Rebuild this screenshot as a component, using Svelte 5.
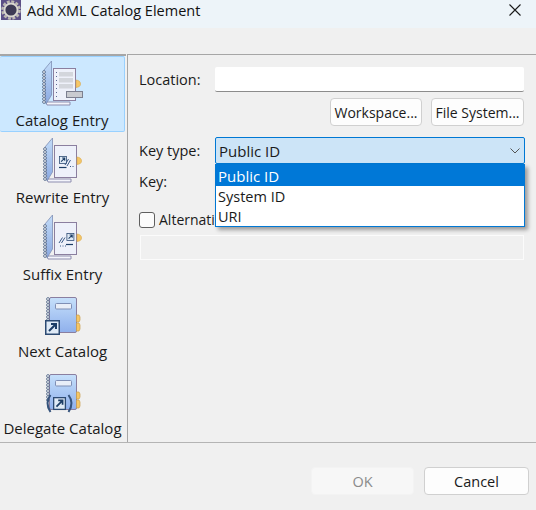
<script>
  const items = [
    { label: 'Catalog Entry', kind: 'catalog', selected: true },
    { label: 'Rewrite Entry', kind: 'rewrite' },
    { label: 'Suffix Entry', kind: 'suffix' },
    { label: 'Next Catalog', kind: 'next' },
    { label: 'Delegate Catalog', kind: 'delegate' }
  ];
  const spiralA = [14, 17, 20, 23, 26, 29, 32, 35, 38, 41, 44];
  const spiralB = [10, 13, 16, 19, 22, 25, 28, 31, 34];
</script>

{#snippet notebook()}
  <path d="M9 44 H33 V47 H10 Z" fill="#f4f5fb" stroke="#8d8daf" />
  <path d="M7 12 L14.5 3 V37 L9 46 Z" fill="url(#cover)" stroke="#7f8fb5" stroke-width=".8" />
  {#each spiralA as y}
    <circle cx="7" cy={y} r="1.4" fill="#fff" stroke="#43597c" stroke-width=".8" />
  {/each}
  <rect x="16.5" y="10.5" width="22" height="32" fill="#eef1fa" stroke="#8b7f9f" />
  <path d="M39 22 Q43.5 22.5 43.5 26 Q43.5 29 39 29.5 Z" fill="#f6c766" stroke="#d9a64a" stroke-width=".6" />
{/snippet}

{#snippet arrowBox(x, y, s)}
  <g transform="translate({x} {y}) scale({s})">
    <rect x=".75" y=".75" width="13.5" height="13.5" fill="#dfeaf6" stroke="#2c4a72" stroke-width="1.5" />
    <path d="M4 11 L10.5 4.5 M6 4 H11 V9" fill="none" stroke="#1c3d66" stroke-width="2" />
  </g>
{/snippet}

{#snippet book()}
  <rect x="11.5" y="8.5" width="27" height="35" rx="1.5" fill="url(#book)" stroke="#8a7fa0" />
  <rect x="17.5" y="14.5" width="16" height="5.5" rx="1" fill="#e8eef8" stroke="#7f8fb5" />
  <path d="M38.5 26 H41 L42 28 V31 L41 33 H38.5 Z M38.5 34 H41 L42 36 V40 L41 42 H38.5 Z" fill="#f6c766" stroke="#c99e4e" stroke-width=".7" />
  {#each spiralB as y}
    <circle cx="10" cy={y} r="1.4" fill="#fff" stroke="#43597c" stroke-width=".8" />
  {/each}
{/snippet}

{#snippet icon(kind)}
  <svg class="icon" viewBox="0 0 50 50" width="50" height="50" aria-hidden="true">
    <defs>
      <linearGradient id="cover" x1="0" y1="0" x2="0" y2="1">
        <stop offset="0" stop-color="#c3dcf8" />
        <stop offset="1" stop-color="#8aa9e2" />
      </linearGradient>
      <linearGradient id="book" x1="0" y1="0" x2="0" y2="1">
        <stop offset="0" stop-color="#c6e0fb" />
        <stop offset="1" stop-color="#8fb0ec" />
      </linearGradient>
    </defs>
    {#if kind === 'catalog'}
      {@render notebook()}
      <path d="M19.5 14 V40" stroke="#5a6a95" stroke-width="1" stroke-dasharray="1 3" />
      <rect x="22" y="14" width="14" height="4.5" fill="#d3d6dc" />
      <rect x="22" y="20" width="14" height="4.5" fill="#d3d6dc" />
      <rect x="22" y="26" width="14" height="4.5" fill="#d3d6dc" />
      <rect x="29.5" y="33.5" width="16" height="6" fill="#c9cbd0" stroke="#7c8090" />
    {:else if kind === 'rewrite'}
      {@render notebook()}
      {@render arrowBox(21, 21, 0.52)}
      <path d="M21 32.5 H28.5" stroke="#1c3d66" stroke-width="1.2" />
      <path d="M27 30 L30.5 24 M29 31 L32.5 25" stroke="#3a5a86" stroke-width="1" />
      <path d="M32 31.5 H37" stroke="#3a5a86" stroke-dasharray="1 1.5" />
    {:else if kind === 'suffix'}
      {@render notebook()}
      {@render arrowBox(28.5, 21, 0.52)}
      <path d="M21 31 L24.5 25.5 M23.5 31 L27 25.5" stroke="#3a5a86" stroke-width="1" />
      <path d="M28 32.5 H35" stroke="#1c3d66" stroke-width="1.2" />
      <path d="M22 34 H28" stroke="#3a5a86" stroke-dasharray="1 1.5" />
    {:else if kind === 'next'}
      {@render book()}
      {@render arrowBox(7, 31, 1)}
    {:else}
      {@render book()}
      {@render arrowBox(15, 31, 0.87)}
      <path d="M12.5 29 Q6.5 37 12.5 46" fill="none" stroke="#35537c" stroke-width="2" />
      <path d="M30.5 29 Q36.5 37 30.5 46" fill="none" stroke="#35537c" stroke-width="2" />
    {/if}
  </svg>
{/snippet}

<div class="window">
  <header class="titlebar">
    <svg class="appicon" viewBox="0 0 20 20" width="20" height="20" aria-hidden="true">
      <rect width="20" height="20" fill="#5b4f86" />
      <circle cx="10" cy="10" r="8.6" fill="none" stroke="#bdbab2" stroke-width="2.4" stroke-dasharray="3 1.5" />
      <circle cx="10" cy="10" r="6.6" fill="#3d3a55" stroke="#d9d7d0" stroke-width="2" />
    </svg>
    <span class="title">Add XML Catalog Element</span>
    <svg class="close" viewBox="0 0 12 12" width="12" height="12" aria-hidden="true">
      <path d="M.5 .5 L11.5 11.5 M11.5 .5 L.5 11.5" stroke="#1a1a1a" stroke-width="1.1" fill="none" />
    </svg>
  </header>

  <div class="body">
    <nav class="sidebar">
      {#each items as it}
        <div class="item" class:selected={it.selected}>
          {@render icon(it.kind)}
          <span>{it.label}</span>
        </div>
      {/each}
    </nav>

    <main class="main">
      <div class="row location">
        <span class="lbl">Location:</span>
        <div class="input"></div>
      </div>
      <div class="browse">
        <button class="btn workspace">Workspace...</button>
        <button class="btn filesystem">File System...</button>
      </div>
      <div class="row keytype">
        <span class="lbl">Key type:</span>
        <div class="combo">
          <span>Public ID</span>
          <svg viewBox="0 0 10 6" width="10" height="6" aria-hidden="true">
            <path d="M.5 .5 L5 5 L9.5 .5" fill="none" stroke="#555" stroke-width="1" />
          </svg>
          <ul class="popup">
            <li class="active">Public ID</li>
            <li>System ID</li>
            <li>URI</li>
          </ul>
        </div>
      </div>
      <div class="row key"><span class="lbl">Key:</span></div>
      <div class="check">
        <span class="box"></span>
        <span class="alt">Alternati</span>
      </div>
      <div class="disabled-input"></div>
    </main>
  </div>

  <footer class="footer">
    <button class="btn ok" disabled>OK</button>
    <button class="btn cancel">Cancel</button>
  </footer>
</div>

<style>
  :global(body) {
    margin: 0;
    background: #f0f0f0;
  }
  .window {
    width: 536px;
    height: 510px;
    overflow: hidden;
    display: flex;
    flex-direction: column;
    background: #f0f0f0;
    color: #1a1a1a;
    font-family: "Open Sans", "Noto Sans", sans-serif;
    font-size: 14.5px;
  }
  .titlebar {
    height: 28px;
    flex: none;
    display: flex;
    align-items: center;
    background: #edf4f9;
    padding: 0 15px 0 1px;
    box-sizing: border-box;
    margin-bottom: 26px;
  }
  .appicon { flex: none; margin-top: -8px; }
  .title {
    margin-left: 6px;
    flex: 1;
    margin-top: -8px;
    font-size: 14.5px;
    color: #111;
  }
  .close { margin-top: -8px; }
  .body {
    flex: none;
    height: 388px;
    display: flex;
    border-bottom: 1px solid #b4b4b4;
  }
  .sidebar {
    width: 126px;
    flex: none;
    border-top: 2px solid #a6a6a6;
    box-sizing: border-box;
  }
  .item {
    height: 77px;
    display: flex;
    flex-direction: column;
    align-items: center;
    padding-top: 2px;
    box-sizing: border-box;
    margin-right: 1px;
    border-radius: 2px;
    font-size: 15px;
  }
  .item span {
    line-height: 20px;
    margin-top: 2px;
    white-space: nowrap;
  }
  .item .icon { flex: none; }
  .selected {
    background: #cce8ff;
    border: 1px solid #99d1ff;
    border-left: 0;
    padding-top: 1px;
    height: 76px;
    margin-bottom: 1px;
  }
  .main {
    flex: 1;
    margin-left: 1px;
    border-top: 1px solid #a6a6a6;
    border-left: 1px solid #a6a6a6;
    padding: 12px 12px 0 11px;
    box-sizing: border-box;
  }
  .row {
    display: flex;
    align-items: center;
  }
  .lbl { width: 76px; flex: none; }
  .input {
    flex: 1;
    height: 25px;
    background: #fff;
    border-bottom: 1px solid #8c8c8c;
    box-sizing: border-box;
    border-radius: 2px;
  }
  .browse {
    display: flex;
    justify-content: flex-end;
    gap: 9px;
    margin-top: 6px;
  }
  .btn {
    height: 28px;
    background: #fdfdfd;
    border: 1px solid #d0d0d0;
    border-radius: 4px;
    font: inherit;
    color: #1a1a1a;
    padding: 0;
    box-sizing: border-box;
  }
  .workspace { width: 92px; font-size: 14px; }
  .filesystem { width: 93px; font-size: 14px; }
  .keytype { margin-top: 11px; }
  .combo {
    position: relative;
    flex: 1;
    height: 27px;
    margin-right: -1px;
    background: #cce4f7;
    border: 1px solid #0078d4;
    border-radius: 2px;
    box-sizing: border-box;
    display: flex;
    align-items: center;
    justify-content: space-between;
    padding: 0 4px 0 3px;
    font-size: 15px;
  }
  .popup {
    position: absolute;
    left: -1px;
    right: -1px;
    top: 26px;
    margin: 0;
    padding: 0;
    list-style: none;
    background: #fff;
    border: 1px solid #0078d4;
    box-sizing: border-box;
    height: 63px;
    box-shadow: 3px 3px 4px rgba(0, 0, 0, .35);
    z-index: 2;
    font-size: 14.5px;
  }
  .popup li {
    height: 20px;
    line-height: 21px;
    padding-left: 2px;
  }
  .popup .active {
    background: #0078d7;
    color: #fff;
    height: 21px;
    font-size: 15px;
    line-height: 23px;
  }
  .key { margin-top: 7px; height: 20px; }
  .check {
    margin-top: 20px;
    display: flex;
    align-items: center;
    gap: 4px;
    height: 17px;
    white-space: nowrap;
  }
  .alt { font-size: 14px; }
  .box {
    width: 16px;
    height: 16px;
    border: 1px solid #5f5f5f;
    border-radius: 3px;
    background: #fbfbfb;
    box-sizing: border-box;
  }
  .disabled-input {
    margin-top: 7px;
    margin-left: 1px;
    height: 25px;
    background: #f0f0f0;
    border: 1px solid #fbfbfb;
    box-sizing: border-box;
  }
  .footer {
    display: flex;
    justify-content: flex-end;
    gap: 10px;
    padding: 24px 7px 0 0;
  }
  .ok {
    width: 103px;
    background: #f7f7f7;
    border-color: #f3f3f3;
    color: #8b8b8b;
  }
  .cancel { width: 105px; }
</style>
